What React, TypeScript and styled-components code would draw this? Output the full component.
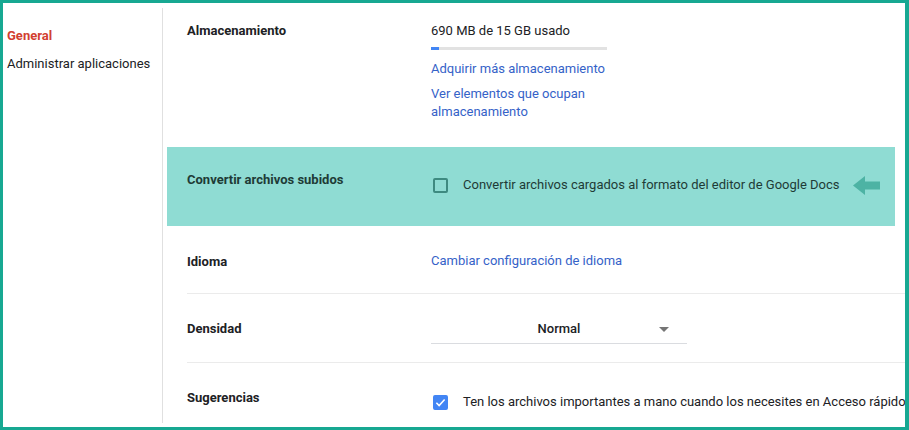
import styled, { createGlobalStyle } from "styled-components";

const GlobalStyle = createGlobalStyle`
  html, body { margin: 0; padding: 0; background: #ffffff; }
  body { font-family: Roboto, "Noto Sans", Arial, sans-serif; font-size: 13px; color: #202124; }
  * { box-sizing: border-box; }
`;

const Frame = styled.div`
  width: 909px; height: 430px; overflow: hidden;
  border: solid #17a892; border-width: 3px 4px 3px 3px;
  display: flex; background: #fff;
`;

const Sidebar = styled.nav`
  width: 160px; flex-shrink: 0; padding-top: 18px;
  display: flex; flex-direction: column;
  border-right: 1px solid #e0e0e0;
  margin: 5px 0 4px;
`;

const NavItem = styled.div<{ $active?: boolean }>`
  padding: 0 4px; line-height: 20px; height: 28px;
  font-size: 13px;
  font-weight: ${p => (p.$active ? 700 : 400)};
  color: ${p => (p.$active ? "#d23f31" : "#202124")};
`;

const Main = styled.main`
  flex: 1; padding-left: 4px; display: flex; flex-direction: column;
`;

const Row = styled.section<{ $highlight?: boolean }>`
  padding-left: 20px;
  margin-right: ${p => (p.$highlight ? "11px" : "0")};
  background: ${p => (p.$highlight ? "#8fdcd3" : "transparent")};
  color: ${p => (p.$highlight ? "#1e3b36" : "#202124")};
`;

const RowInner = styled.div<{ $pt: number; $h: number; $line?: boolean }>`
  display: grid; grid-template-columns: 244px 1fr;
  height: ${p => p.$h}px; padding-top: ${p => p.$pt}px;
  border-bottom: 1px solid ${p => (p.$line ? "#ebebeb" : "transparent")};
`;

const Label = styled.div`
  font-weight: 700; font-size: 13px; line-height: 20px;
`;

const Control = styled.div<{ $offset?: number }>`
  display: flex; flex-direction: column; align-items: flex-start;
  margin-top: ${p => p.$offset ?? 0}px;
`;

const Text = styled.div`
  line-height: 20px; font-size: 13px;
`;

const Link = styled.a`
  color: #3562c8; text-decoration: none; font-size: 13px; line-height: 18px;
  cursor: pointer;
`;

const LinkStack = styled.div`
  display: flex; flex-direction: column; gap: 7px; margin-top: 10px;
`;

const Bar = styled.div`
  width: 176px; height: 3px; background: #e2e2e2; margin-top: 6px;
`;

const BarFill = styled.div`
  height: 100%; background: #4285f4;
`;

const CheckRow = styled.label`
  display: flex; align-items: center; gap: 15px; padding-left: 2px;
  line-height: 20px; font-size: 13px; white-space: nowrap;
`;

const Box = styled.span<{ $checked?: boolean; $tone?: string }>`
  width: 15px; height: 15px; border-radius: 2px; flex-shrink: 0;
  border: 2px solid ${p => (p.$checked ? "#4285f4" : p.$tone ?? "#5f6368")};
  background: ${p => (p.$checked ? "#4285f4" : "transparent")};
  display: flex; align-items: center; justify-content: center;
`;

const Arrow = styled.svg`
  flex-shrink: 0; margin-left: -2px;
`;

const Select = styled.div`
  width: 256px; height: 30px; border-bottom: 1px solid #dadce0;
  display: flex; align-items: center; position: relative;
`;

const SelectValue = styled.span`
  flex: 1; text-align: center; font-weight: 500; font-size: 13px;
`;

const Caret = styled.span`
  position: absolute; right: 18px; top: 13px;
  width: 0; height: 0; border-left: 5px solid transparent; border-right: 5px solid transparent;
  border-top: 5px solid #757575;
`;

export default function App() {
  const used = 690;
  const total = 15 * 1024;
  return (
    <>
      <GlobalStyle />
      <Frame>
        <Sidebar>
          <NavItem $active>General</NavItem>
          <NavItem>Administrar aplicaciones</NavItem>
        </Sidebar>
        <Main>
          <Row>
            <RowInner $pt={18} $h={144}>
              <Label>Almacenamiento</Label>
              <Control>
                <Text>690 MB de 15 GB usado</Text>
                <Bar>
                  <BarFill style={{ width: `${Math.max(4, (used / total) * 100)}%` }} />
                </Bar>
                <LinkStack>
                  <Link>Adquirir más almacenamiento</Link>
                  <Link>
                    Ver elementos que ocupan
                    <br />
                    almacenamiento
                  </Link>
                </LinkStack>
              </Control>
            </RowInner>
          </Row>
          <Row $highlight>
            <RowInner $pt={23} $h={79}>
              <Label>Convertir archivos subidos</Label>
              <Control $offset={5}>
                <CheckRow>
                  <Box $tone="#3e8a80" />
                  Convertir archivos cargados al formato del editor de Google Docs
                  <Arrow width="27" height="19" viewBox="0 0 27 19">
                    <path d="M0 9.5 L12 0 L12 5.5 L27 5.5 L27 13.5 L12 13.5 L12 19 Z" fill="#4db3a4" />
                  </Arrow>
                </CheckRow>
              </Control>
            </RowInner>
          </Row>
          <Row>
            <RowInner $pt={26} $h={68} $line>
              <Label>Idioma</Label>
              <Control>
                <Link>Cambiar configuración de idioma</Link>
              </Control>
            </RowInner>
          </Row>
          <Row>
            <RowInner $pt={25} $h={69} $line>
              <Label>Densidad</Label>
              <Control $offset={-5}>
                <Select>
                  <SelectValue>Normal</SelectValue>
                  <Caret />
                </Select>
              </Control>
            </RowInner>
          </Row>
          <Row>
            <RowInner $pt={25} $h={62}>
              <Label>Sugerencias</Label>
              <Control $offset={4}>
                <CheckRow>
                  <Box $checked>
                    <svg width="11" height="11" viewBox="0 0 24 24">
                      <path d="M3 12.5 L9 18.5 L21 5.5" fill="none" stroke="#fff" strokeWidth="3.5" />
                    </svg>
                  </Box>
                  Ten los archivos importantes a mano cuando los necesites en Acceso rápido
                </CheckRow>
              </Control>
            </RowInner>
          </Row>
        </Main>
      </Frame>
    </>
  );
}
